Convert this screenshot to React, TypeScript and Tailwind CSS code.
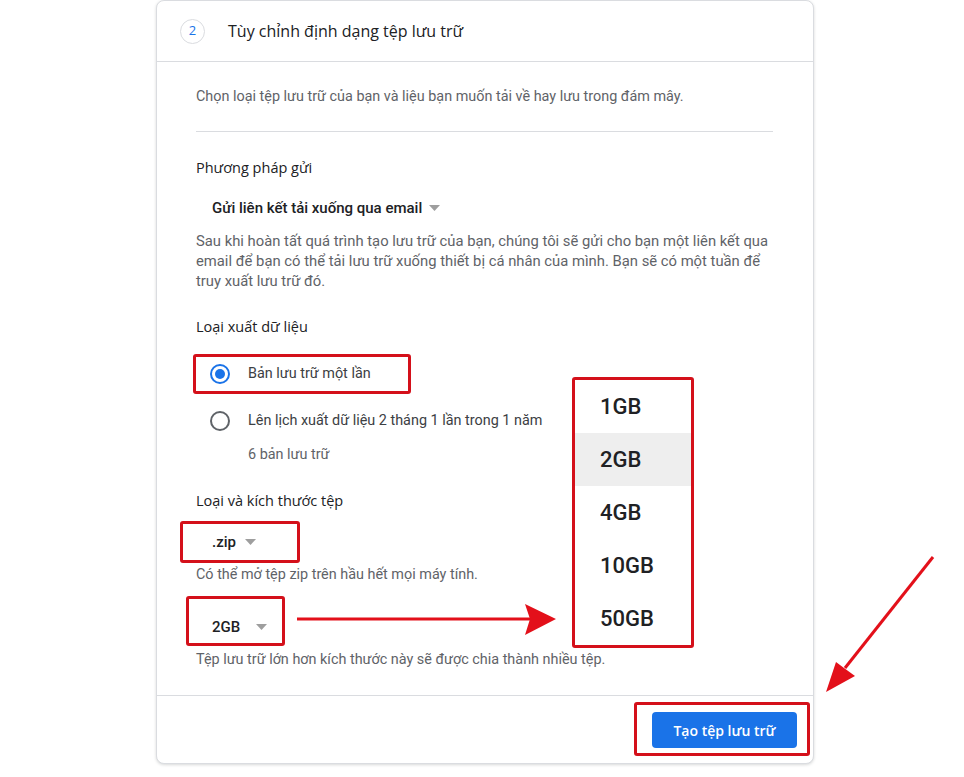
import React from 'react';

const RED = 'border-[#d4101a]';

function Caret() {
  return (
    <svg width="11" height="6" viewBox="0 0 11 6" className="inline-block">
      <path d="M0 0 L11 0 L5.5 6 Z" fill="#9e9e9e" />
    </svg>
  );
}

function Radio({ checked }: { checked: boolean }) {
  return checked ? (
    <span className="w-5 h-5 rounded-full border-2 border-[#1a73e8] flex items-center justify-center shrink-0">
      <span className="w-[10px] h-[10px] rounded-full bg-[#1a73e8]" />
    </span>
  ) : (
    <span className="w-5 h-5 rounded-full border-2 border-[#5f6368] shrink-0" />
  );
}

const sizes = ['1GB', '2GB', '4GB', '10GB', '50GB'];

export default function App() {
  return (
    <div className="relative w-[964px] h-[777px] bg-white overflow-hidden font-['Roboto',sans-serif]">
      {/* thẻ cài đặt */}
      <div className="ml-[156px] w-[658px] border border-[#dadce0] rounded-lg shadow-[0_1px_3px_rgba(60,64,67,0.2)] bg-white">
        <div className="h-[61px] flex items-center pl-[23px] border-b border-[#dadce0]">
          <span className="w-[25px] h-[25px] rounded-full border border-[#dadce0] flex items-center justify-center text-[13px] text-[#1a73e8] font-['Open_Sans',sans-serif]">
            2
          </span>
          <span className="ml-[23px] text-[16px] text-[#202124] font-['Open_Sans',sans-serif]">
            Tùy chỉnh định dạng tệp lưu trữ
          </span>
        </div>

        <div className="pl-[39px] pr-[40px] pt-[25px] pb-[25px]">
          <p className="text-[14.4px] leading-5 text-[#5f6368]">
            Chọn loại tệp lưu trữ của bạn và liệu bạn muốn tải về hay lưu trong đám mây.
          </p>
          <div className="mt-6 border-t border-[#dadce0]" />

          <h3 className="mt-6 text-[14.5px] leading-6 text-[#202124] font-['Open_Sans',sans-serif]">Phương pháp gửi</h3>
          <div className="mt-[18px] pl-4 flex items-center gap-[7px] text-[15px] leading-5 font-medium text-[#202124]">
            Gửi liên kết tải xuống qua email <Caret />
          </div>
          <p className="mt-[13px] text-[14.8px] leading-5 text-[#5f6368]">
            Sau khi hoàn tất quá trình tạo lưu trữ của bạn, chúng tôi sẽ gửi cho bạn một liên kết qua email để bạn có thể tải lưu trữ xuống thiết bị cá nhân của mình. Bạn sẽ có một tuần để truy xuất lưu trữ đó.
          </p>

          <h3 className="mt-6 text-[14.5px] leading-6 text-[#202124] font-['Open_Sans',sans-serif]">Loại xuất dữ liệu</h3>
          <div className={`mt-[15px] -ml-[3px] w-[218px] h-10 border-[3px] ${RED} rounded-[3px] flex items-center pl-[14px] gap-[18px] text-[14.4px] text-[#3c4043]`}>
            <Radio checked />
            Bản lưu trữ một lần
          </div>
          <div className="mt-[7px] h-10 flex items-center pl-[14px] gap-[18px] text-[14.4px] text-[#3c4043]">
            <Radio checked={false} />
            Lên lịch xuất dữ liệu 2 tháng 1 lần trong 1 năm
          </div>
          <p className="mt-1 pl-[52px] text-[14.4px] leading-5 text-[#5f6368]">6 bản lưu trữ</p>

          <h3 className="mt-6 text-[14.5px] leading-6 text-[#202124] font-['Open_Sans',sans-serif]">Loại và kích thước tệp</h3>
          <div className={`mt-2 -ml-4 w-[120px] h-[42px] border-[3px] ${RED} rounded-[3px] flex items-center pl-[29px] gap-[9px] text-[15px] font-medium text-[#202124]`}>
            .zip <Caret />
          </div>
          <p className="mt-[2px] text-[14.4px] leading-5 text-[#5f6368]">Có thể mở tệp zip trên hầu hết mọi máy tính.</p>
          <div className={`mt-[11px] -ml-[10px] w-[99px] h-[50px] border-[3px] ${RED} rounded-[3px] flex items-center pl-[23px] pt-[12px] gap-[16px] text-[15px] font-medium text-[#202124]`}>
            2GB <Caret />
          </div>
          <p className="mt-1 text-[14.4px] leading-5 text-[#5f6368]">Tệp lưu trữ lớn hơn kích thước này sẽ được chia thành nhiều tệp.</p>
        </div>

        <div className="border-t border-[#dadce0] flex justify-end pt-[6px] pr-[3px] pb-[7px]">
          <div className={`border-[3px] ${RED} rounded-[3px] pl-[15px] pr-[10px] pt-[7px] pb-[5px]`}>
            <button className="w-[145px] h-9 rounded bg-[#1a73e8] text-white text-[14px] font-semibold font-['Open_Sans',sans-serif]">
              Tạo tệp lưu trữ
            </button>
          </div>
        </div>
      </div>

      {/* menu kích thước đang mở */}
      <div className={`absolute left-[572px] top-[377px] w-[122px] border-[3px] ${RED} rounded-[3px] bg-white`}>
        {sizes.map(s => (
          <div
            key={s}
            className={`h-[53px] flex items-center pl-[25px] text-[22px] font-medium text-[#202124] ${s === '2GB' ? 'bg-[#eeeeee]' : ''}`}
          >
            {s}
          </div>
        ))}
      </div>

      {/* mũi tên chú thích */}
      <svg className="absolute inset-0 pointer-events-none" width="964" height="777" viewBox="0 0 964 777">
        <line x1="297" y1="619" x2="530" y2="619" stroke="#e3101a" strokeWidth="3" />
        <path d="M556 619 L525 604 L530 619 L525 635 Z" fill="#e3101a" />
        <line x1="933" y1="557" x2="845" y2="668" stroke="#e3101a" strokeWidth="3" />
        <path d="M826 692 L836 662 L844 668 L855 676 Z" fill="#e3101a" />
      </svg>
    </div>
  );
}
